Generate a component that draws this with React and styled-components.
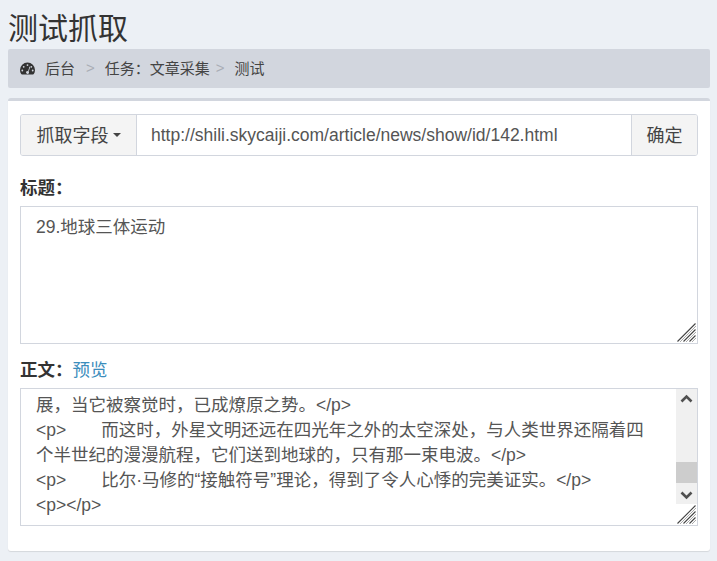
import React from 'react';
import styled, { createGlobalStyle } from 'styled-components';

const GlobalStyle = createGlobalStyle`
  html, body {
    margin: 0;
    padding: 0;
    background: #ecf0f5;
    overflow: hidden;
  }
  body {
    font-family: "Liberation Sans", "Noto Sans CJK SC", sans-serif;
    color: #333;
  }
`;

const Page = styled.div`
  width: 717px;
  height: 561px;
  padding: 0 7px 0 8px;
  box-sizing: border-box;
`;

const Title = styled.h1`
  margin: 0;
  padding-top: 10px;
  height: 49px;
  box-sizing: border-box;
  font-size: 30px;
  line-height: 38px;
  font-weight: 400;
  color: #333;
`;

const Breadcrumb = styled.div`
  display: flex;
  align-items: center;
  height: 39px;
  padding-left: 12px;
  background: #d2d6de;
  border-radius: 2px;
  font-size: 15px;
  color: #444;
`;

const Crumb = styled.span`
  margin-left: ${(p) => p.$gap}px;
  padding-bottom: 2px;
`;

const Sep = styled.span`
  margin-left: ${(p) => p.$gap}px;
  padding-bottom: 2px;
  color: #a9adb5;
`;

const Box = styled.div`
  margin-top: 10px;
  height: 453px;
  box-sizing: border-box;
  border-top: 3px solid #d2d6de;
  border-radius: 3px;
  background: #fff;
  padding: 13px 12px 0;
  box-shadow: 0 1px 1px rgba(0, 0, 0, 0.1);
`;

const InputGroup = styled.div`
  display: flex;
  height: 42px;
  box-sizing: border-box;
  border: 1px solid #d2d6de;
  border-radius: 3px;
  font-size: 17.5px;
  overflow: hidden;
`;

const Addon = styled.div`
  display: flex;
  align-items: center;
  justify-content: center;
  gap: 4px;
  width: ${(p) => p.$width}px;
  flex: none;
  box-sizing: border-box;
  padding-bottom: 2px;
  font-size: 18px;
  background: #f4f4f4;
  color: #444;
  ${(p) => (p.$left ? 'border-right: 1px solid #d2d6de;' : 'border-left: 1px solid #d2d6de;')}
`;

const Caret = styled.span`
  width: 0;
  height: 0;
  margin-top: 2px;
  border-left: 4.5px solid transparent;
  border-right: 4.5px solid transparent;
  border-top: 4.5px solid #444;
`;

const UrlField = styled.div`
  flex: 1;
  padding-left: 14px;
  line-height: 40px;
  color: #555;
`;

const Label = styled.div`
  margin-top: ${(p) => p.$top}px;
  margin-bottom: 4px;
  height: 28px;
  line-height: 28px;
  font-size: 17.5px;
  font-weight: 700;
  color: #333;
`;

const Link = styled.a`
  font-weight: 400;
  color: #3c8dbc;
`;

const TextBox = styled.div`
  position: relative;
  height: 138px;
  box-sizing: border-box;
  border: 1px solid #d2d6de;
  padding: ${(p) => p.$padTop}px 15px 0;
  font-size: 17.5px;
  line-height: 25px;
  color: #555;
  overflow: hidden;
`;

const Line = styled.div`
  white-space: pre;
`;

const Grip = styled.svg`
  position: absolute;
  right: 0;
  bottom: 0;
  width: 21px;
  height: 21px;
`;

const ScrollBar = styled.div`
  position: absolute;
  top: 0;
  right: 0;
  width: 21px;
  height: 115px;
  display: flex;
  flex-direction: column;
  background: #f0f0f0;
`;

const ScrollArrow = styled.svg`
  width: 21px;
  height: 17px;
  flex: none;
`;

const ScrollTrack = styled.div`
  flex: 1;
  display: flex;
  flex-direction: column;
  justify-content: flex-end;
`;

const ScrollThumb = styled.div`
  height: 21px;
  margin-bottom: 4px;
  background: #cdcdcd;
`;

const Gauge = () => (
  <svg width="15" height="13" viewBox="0 0 15 13" style={{ flex: 'none' }}>
    <path
      fillRule="evenodd"
      fill="#333"
      d="M7.5.5A7.5 7.5 0 0 0 0 8c0 1.5.4 2.9 1.2 4 .2.3.5.5.8.5h11c.3 0 .6-.2.8-.5.8-1.1 1.2-2.5 1.2-4A7.5 7.5 0 0 0 7.5.5zM7.5 2.2a.9.9 0 1 1 0 1.8.9.9 0 0 1 0-1.8zM3.7 3.9a.9.9 0 1 1 0 1.8.9.9 0 0 1 0-1.8zM11.3 3.9a.9.9 0 1 1 0 1.8.9.9 0 0 1 0-1.8zM2.3 7.6a.9.9 0 1 1 0 1.8.9.9 0 0 1 0-1.8zM12.7 7.6a.9.9 0 1 1 0 1.8.9.9 0 0 1 0-1.8zM9.5 4.6l.7.3-1.5 4.5a1.5 1.5 0 1 1-2.4.1 1.5 1.5 0 0 1 1.8-.3z"
    />
  </svg>
);

const ResizeGrip = () => (
  <Grip viewBox="0 0 21 21">
    <path d="M19.5 1.5 1.5 19.5M19.5 7.5 7.5 19.5M19.5 13.5 13.5 19.5" stroke="#444" strokeWidth="1.1" fill="none" />
    <path d="M20 4 4 20M20 10 10 20M20 16 16 20" stroke="#aaa" strokeWidth="1" fill="none" />
  </Grip>
);

const App = () => (
  <Page>
    <GlobalStyle />
    <Title>测试抓取</Title>
    <Breadcrumb>
      <Gauge />
      <Crumb $gap={10}>后台</Crumb>
      <Sep $gap={11}>&gt;</Sep>
      <Crumb $gap={10}>任务：文章采集</Crumb>
      <Sep $gap={6}>&gt;</Sep>
      <Crumb $gap={10}>测试</Crumb>
    </Breadcrumb>
    <Box>
      <InputGroup>
        <Addon $width={116} $left>
          抓取字段
          <Caret />
        </Addon>
        <UrlField>http://shili.skycaiji.com/article/news/show/id/142.html</UrlField>
        <Addon $width={66}>确定</Addon>
      </InputGroup>
      <Label $top={18}>标题：</Label>
      <TextBox $padTop={8}>
        <Line>29.地球三体运动</Line>
        <ResizeGrip />
      </TextBox>
      <Label $top={12}>
        正文：<Link>预览</Link>
      </Label>
      <TextBox $padTop={4}>
        <Line>展，当它被察觉时，已成燎原之势。&lt;/p&gt;</Line>
        <Line>&lt;p&gt;　　而这时，外星文明还远在四光年之外的太空深处，与人类世界还隔着四</Line>
        <Line>个半世纪的漫漫航程，它们送到地球的，只有那一束电波。&lt;/p&gt;</Line>
        <Line>&lt;p&gt;　　比尔·马修的“接触符号”理论，得到了令人心悸的完美证实。&lt;/p&gt;</Line>
        <Line>&lt;p&gt;&lt;/p&gt;</Line>
        <ScrollBar>
          <ScrollArrow viewBox="0 0 21 17">
            <path d="M5.5 12.5 10.5 7.5 15.5 12.5" stroke="#505050" strokeWidth="2.6" fill="none" />
          </ScrollArrow>
          <ScrollTrack>
            <ScrollThumb />
          </ScrollTrack>
          <ScrollArrow viewBox="0 0 21 17">
            <path d="M5.5 5.5 10.5 10.5 15.5 5.5" stroke="#505050" strokeWidth="2.6" fill="none" />
          </ScrollArrow>
        </ScrollBar>
        <ResizeGrip />
      </TextBox>
    </Box>
  </Page>
);

export default App;
